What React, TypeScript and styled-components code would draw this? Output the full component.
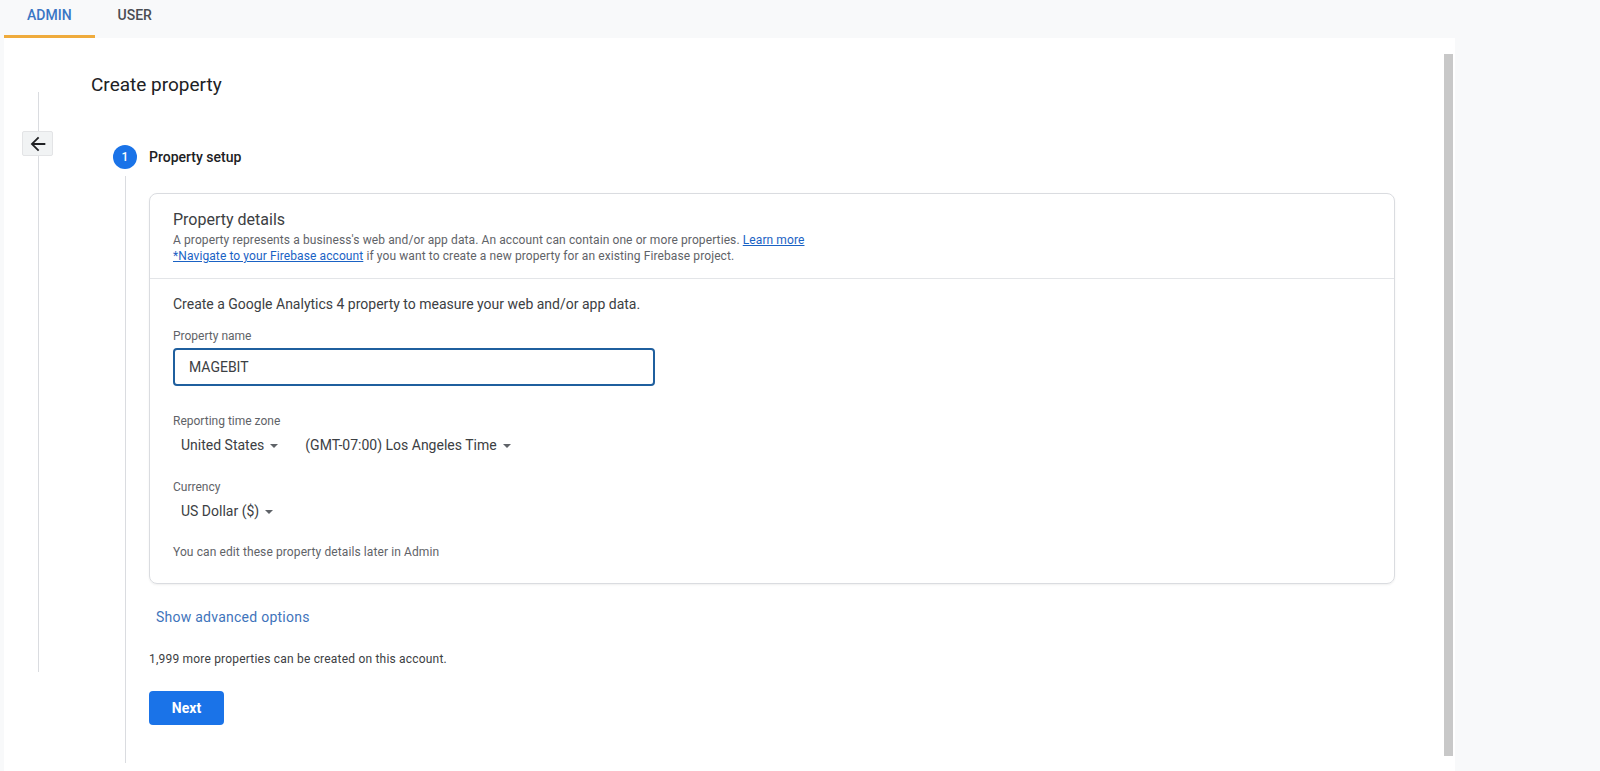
import styled, { createGlobalStyle } from "styled-components";

const GlobalStyle = createGlobalStyle`
  html, body {
    margin: 0;
    padding: 0;
    background: #f8f9fa;
    font-family: Roboto, "Liberation Sans", Arial, sans-serif;
    color: #202124;
  }
  * { box-sizing: border-box; }
`;

const Page = styled.div`
  height: 771px;
  display: flex;
  flex-direction: column;
  overflow: hidden;
`;

const TabBar = styled.div`
  height: 38px;
  display: flex;
  padding-left: 4px;
  background: #f8f9fa;
`;

const Tab = styled.div<{ $active?: boolean }>`
  padding: 0 23px 5px;
  display: flex;
  align-items: center;
  font-size: 14px;
  font-weight: 500;
  text-transform: uppercase;
  color: ${(p) => (p.$active ? "#3a76c4" : "#4a4d52")};
  border-bottom: 3px solid ${(p) => (p.$active ? "#efab3c" : "transparent")};
`;

const Panel = styled.div`
  flex: 1;
  width: 1451px;
  margin-left: 4px;
  background: #ffffff;
  display: flex;
`;

const Rail = styled.div`
  position: relative;
  width: 68px;
  flex-shrink: 0;
  display: flex;
  justify-content: center;
  padding-top: 54px;
`;

const RailLine = styled.div`
  width: 1px;
  height: 580px;
  background: #dadce0;
`;

const BackButton = styled.button`
  position: absolute;
  top: 93px;
  left: 18px;
  width: 31px;
  height: 25px;
  padding: 0;
  border: 1px solid #e3e4e6;
  border-radius: 2px;
  background: #f1f3f4;
  display: flex;
  align-items: center;
  justify-content: center;
  color: #202124;
`;

const Main = styled.div`
  flex: 1;
  padding: 35px 49px 0 19px;
`;

const PageTitle = styled.h1`
  margin: 0;
  font-size: 19px;
  line-height: 24px;
  font-weight: 400;
  color: #202124;
`;

const StepHeader = styled.div`
  margin-top: 48px;
  margin-left: 22px;
  display: flex;
  align-items: center;
  gap: 12px;
  height: 24px;
`;

const StepNumber = styled.div`
  width: 24px;
  height: 24px;
  border-radius: 50%;
  background: #1a73e8;
  color: #fff;
  font-size: 12px;
  font-weight: 500;
  display: flex;
  align-items: center;
  justify-content: center;
`;

const StepLabel = styled.div`
  font-size: 14px;
  font-weight: 500;
  color: #202124;
`;

const StepBody = styled.div`
  margin: 7px 0 0 34px;
  border-left: 1px solid #dadce0;
  padding: 17px 0 38px 23px;
`;

const Card = styled.div`
  border: 1px solid #dadce0;
  border-radius: 8px;
  box-shadow: 0 1px 2px rgba(60, 64, 67, 0.08);
`;

const CardHeader = styled.div`
  padding: 14px 23px 14px;
  border-bottom: 1px solid #e3e5e8;
`;

const CardTitle = styled.div`
  font-size: 16px;
  line-height: 24px;
  color: #3c4043;
`;

const HelpText = styled.div`
  font-size: 12px;
  line-height: 16px;
  letter-spacing: 0.1px;
  color: #5f6368;
`;

const Link = styled.a`
  color: #1a62c4;
  text-decoration: underline;
`;

const CardBody = styled.div`
  padding: 15px 23px 23px;
`;

const Intro = styled.div`
  font-size: 14px;
  line-height: 20px;
  color: #3c4043;
`;

const FieldLabel = styled.div<{ $gap: number }>`
  margin-top: ${(p) => p.$gap}px;
  font-size: 12px;
  line-height: 16px;
  color: #5f6368;
`;

const TextInput = styled.div`
  margin-top: 4px;
  width: 482px;
  height: 38px;
  border: 2px solid #1f5f9e;
  border-radius: 4px;
  padding: 0 14px;
  display: flex;
  align-items: center;
  font-size: 14px;
  color: #3c4043;
`;

const DropdownRow = styled.div<{ $gap: number }>`
  margin-top: ${(p) => p.$gap}px;
  display: flex;
  gap: 11px;
`;

const Dropdown = styled.div`
  padding: 0 8px;
  display: flex;
  align-items: center;
  gap: 6px;
  font-size: 14px;
  line-height: 20px;
  color: #3c4043;
`;

const Caret = styled.span`
  width: 0;
  height: 0;
  border-left: 4px solid transparent;
  border-right: 4px solid transparent;
  border-top: 4px solid #5f6368;
  margin-top: 2px;
`;

const Note = styled(HelpText)<{ $gap: number }>`
  margin-top: ${(p) => p.$gap}px;
`;

const TextButton = styled.button`
  margin-top: 23px;
  padding: 0 7px;
  border: none;
  background: none;
  font-family: inherit;
  font-size: 14px;
  line-height: 20px;
  letter-spacing: 0.25px;
  color: #3f74bb;
  font-weight: 400;
`;

const Count = styled.div`
  margin-top: 24px;
  font-size: 12px;
  line-height: 16px;
  letter-spacing: 0.2px;
  color: #3c4043;
`;

const PrimaryButton = styled.button`
  margin-top: 24px;
  width: 75px;
  height: 34px;
  border: none;
  border-radius: 4px;
  background: #1a73e8;
  color: #fff;
  font-family: inherit;
  font-size: 14px;
  font-weight: 700;
`;

const ScrollColumn = styled.div`
  width: 11px;
  padding: 16px 2px 15px 0;
  flex-shrink: 0;
`;

const ScrollThumb = styled.div`
  width: 9px;
  height: 100%;
  background: #c8c8c8;
`;

const ArrowBack = () => (
  <svg width="22" height="22" viewBox="0 0 24 24" fill="currentColor">
    <path d="M20 11H7.83l5.59-5.59L12 4l-8 8 8 8 1.41-1.41L7.83 13H20v-2z" />
  </svg>
);

export default function App() {
  return (
    <Page>
      <GlobalStyle />
      <TabBar>
        <Tab $active>Admin</Tab>
        <Tab>User</Tab>
      </TabBar>
      <Panel>
        <Rail>
          <RailLine />
          <BackButton aria-label="Back">
            <ArrowBack />
          </BackButton>
        </Rail>
        <Main>
          <PageTitle>Create property</PageTitle>
          <StepHeader>
            <StepNumber>1</StepNumber>
            <StepLabel>Property setup</StepLabel>
          </StepHeader>
          <StepBody>
            <Card>
              <CardHeader>
                <CardTitle>Property details</CardTitle>
                <HelpText>
                  A property represents a business's web and/or app data. An account can contain one or
                  more properties. <Link>Learn more</Link>
                </HelpText>
                <HelpText>
                  <Link>*Navigate to your Firebase account</Link> if you want to create a new property for
                  an existing Firebase project.
                </HelpText>
              </CardHeader>
              <CardBody>
                <Intro>Create a Google Analytics 4 property to measure your web and/or app data.</Intro>
                <FieldLabel $gap={14}>Property name</FieldLabel>
                <TextInput>MAGEBIT</TextInput>
                <FieldLabel $gap={27}>Reporting time zone</FieldLabel>
                <DropdownRow $gap={6}>
                  <Dropdown>
                    United States <Caret />
                  </Dropdown>
                  <Dropdown>
                    (GMT-07:00) Los Angeles Time <Caret />
                  </Dropdown>
                </DropdownRow>
                <FieldLabel $gap={24}>Currency</FieldLabel>
                <DropdownRow $gap={6}>
                  <Dropdown>
                    US Dollar ($) <Caret />
                  </Dropdown>
                </DropdownRow>
                <Note $gap={23}>You can edit these property details later in Admin</Note>
              </CardBody>
            </Card>
            <TextButton>Show advanced options</TextButton>
            <Count>1,999 more properties can be created on this account.</Count>
            <PrimaryButton>Next</PrimaryButton>
          </StepBody>
        </Main>
        <ScrollColumn>
          <ScrollThumb />
        </ScrollColumn>
      </Panel>
    </Page>
  );
}
